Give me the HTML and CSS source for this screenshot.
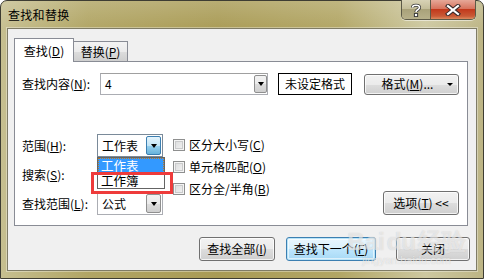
FILE: index.html
```html
<!DOCTYPE html>
<html>
<head>
<meta charset="utf-8">
<link rel="stylesheet" href="styles.css">
</head>
<body>
<div class="window">
  <div class="titlebar">
    <span class="title">查找和替换</span>
    <div class="caption">
      <div class="cap-btn help"><svg width="12" height="14" viewBox="0 0 12 14"><path d="M2.5 4.5 C2.5 1.5 9.5 1.5 9.5 4.5 C9.5 7 6 6.5 6 9" fill="none" stroke="#3a3a3a" stroke-width="3.2"/><path d="M2.5 4.5 C2.5 1.5 9.5 1.5 9.5 4.5 C9.5 7 6 6.5 6 9" fill="none" stroke="#fff" stroke-width="1.6"/><rect x="4.4" y="10.4" width="3.2" height="3.2" fill="#fff" stroke="#3a3a3a" stroke-width="1"/></svg></div>
      <div class="cap-btn close"><svg width="16" height="12" viewBox="0 0 16 12"><path d="M3 2 L13 10 M13 2 L3 10" stroke="#3a2a2a" stroke-width="4.2" stroke-linecap="square"/><path d="M3 2 L13 10 M13 2 L3 10" stroke="#fff" stroke-width="2.2" stroke-linecap="square"/></svg></div>
    </div>
  </div>
  <div class="client">
    <div class="tabs">
      <div class="tab active">查找(<u>D</u>)</div>
      <div class="tab">替换(<u>P</u>)</div>
    </div>
    <div class="panel">
      <div class="row-find">
        <span class="label-find">查找内容(<u>N</u>):</span>
        <div class="combo combo-find"><span class="combo-text">4</span><span class="drop drop-small"><i class="arrow"></i></span></div>
        <div class="format-box">未设定格式</div>
        <div class="btn btn-format"><span class="btn-label">格式(<u>M</u>)...</span><i class="arrow arrow-btn"></i></div>
      </div>
      <div class="lower">
        <div class="fields">
          <span class="flabel">范围(<u>H</u>):</span>
          <div class="combo combo-small open"><span class="combo-text">工作表</span><span class="drop drop-hot"><i class="arrow"></i></span>
            <div class="droplist">
              <div class="item selected">工作表</div>
              <div class="item">工作簿</div>
            </div>
          </div>
          <span class="flabel">搜索(<u>S</u>):</span>
          <div class="combo combo-small"><span class="combo-text">按行</span><span class="drop"><i class="arrow"></i></span></div>
          <span class="flabel">查找范围(<u>L</u>):</span>
          <div class="combo combo-small"><span class="combo-text">公式</span><span class="drop"><i class="arrow"></i></span></div>
          <div class="redmark"></div>
        </div>
        <div class="checks">
          <label class="check"><span class="box"></span>区分大小写(<u>C</u>)</label>
          <label class="check"><span class="box"></span>单元格匹配(<u>O</u>)</label>
          <label class="check"><span class="box"></span>区分全/半角(<u>B</u>)</label>
        </div>
        <div class="btn btn-options">选项(<u>T</u>) &lt;&lt;</div>
      </div>
    </div>
    <div class="actions">
      <div class="btn btn-all">查找全部(<u>I</u>)</div>
      <div class="btn btn-next default">查找下一个(<u>F</u>)</div>
      <div class="btn btn-close">关闭</div>
    </div>
    <div class="watermark"><span class="wm-big">Bai<span class="wm-du">du</span>经验</span><span class="wm-small">jingyan.baidu.com</span></div>
  </div>
</div>
</body>
</html>
```
FILE: styles.css
```css
html, body {
  margin: 0;
  padding: 0;
  width: 484px;
  height: 279px;
  overflow: hidden;
  background: #fff;
}
body {
  font-family: "Noto Sans CJK SC", "Noto Sans", sans-serif;
  font-size: 12px;
  color: #000;
}
u { text-decoration: underline; text-underline-offset: 1px; }

.window {
  width: 484px;
  height: 279px;
  box-sizing: border-box;
  border: 1px solid #3e3d33;
  border-radius: 7px 7px 0 0;
  background:
    linear-gradient(to bottom, rgba(255,255,255,0.18), rgba(255,255,255,0) 30px),
    linear-gradient(to right, #c6bf90 0%, #b1a564 18%, #a99b55 45%, #b2a665 70%, #cdc8a0 88%, #bdb585 100%);
  display: flex;
  flex-direction: column;
  position: relative;
}
.titlebar {
  height: 27px;
  display: flex;
  justify-content: space-between;
  align-items: flex-start;
  flex: none;
}
.title {
  margin: 6px 0 0 7px;
  line-height: 16px;
  color: #000;
  letter-spacing: 0.3px;
}
.caption {
  display: flex;
  margin-right: 7px;
  margin-top: -1px;
  border: 1px solid #5c5a48;
  border-top: none;
  border-radius: 0 0 5px 5px;
  overflow: hidden;
  box-shadow: 0 1px 0 rgba(255,255,255,0.5);
}
.cap-btn {
  height: 19px;
  display: flex;
  align-items: center;
  justify-content: center;
}
.help {
  width: 28px;
  background: linear-gradient(to bottom, #d8d3b6 0%, #c4be9a 45%, #a9a27a 50%, #b7b08a 100%);
  border-right: 1px solid #5c5a48;
}
.close {
  width: 44px;
  background: linear-gradient(to bottom, #e6a898 0%, #d7745e 45%, #c2391c 50%, #c95a36 85%, #dd8a5e 100%);
}

.client {
  flex: none;
  margin: 0 6px;
  height: 243px;
  box-sizing: border-box;
  background: #f0f0f0;
  border: 1px solid #7f7c66;
  box-shadow: 0 0 0 1px rgba(255,255,255,0.35);
  position: relative;
}
.tabs {
  display: flex;
  align-items: flex-end;
  padding: 9px 0 0 6px;
  height: 23px;
  position: relative;
  z-index: 2;
}
.tab {
  box-sizing: border-box;
  height: 20px;
  width: 54px;
  border: 1px solid #898c95;
  border-left: none;
  border-bottom: none;
  background: linear-gradient(to bottom, #f3f3f3 0%, #ebebeb 50%, #dddddd 51%, #cfcfcf 100%);
  display: flex;
  align-items: center;
  justify-content: center;
  line-height: 16px;
  padding-top: 1px;
}
.tab.active {
  width: 60px;
  height: 24px;
  border-left: 1px solid #898c95;
  background: #fff;
  margin-bottom: -1px;
  padding-top: 0;
}

.panel {
  margin-left: 6px;
  width: 454px;
  height: 165px;
  box-sizing: border-box;
  border: 1px solid #898c95;
  background: #fff;
  padding: 11px 8px 0 7px;
  position: relative;
}
.row-find {
  display: flex;
  align-items: center;
  height: 22px;
}
.label-find {
  width: 78px;
  flex: none;
  line-height: 16px;
}
.combo {
  box-sizing: border-box;
  border: 1px solid #abadb3;
  border-top-color: #a0a0a0;
  background: #fff;
  display: flex;
  align-items: stretch;
  position: relative;
}
.combo-find {
  width: 168px;
  height: 22px;
}
.combo-text {
  flex: 1;
  padding-left: 4px;
  display: flex;
  align-items: center;
  line-height: 16px;
}
.drop {
  box-sizing: border-box;
  width: 15px;
  margin: 1px;
  border: 1px solid #8f8f8f;
  border-radius: 2px;
  background: linear-gradient(to bottom, #f2f2f2 0%, #ebebeb 50%, #dddddd 51%, #cfcfcf 100%);
  display: flex;
  align-items: center;
  justify-content: center;
}
.drop-small {
  width: 13px;
  margin: 1px 0 1px 1px;
}
.drop-hot {
  border-color: #3c7fb1;
  background: linear-gradient(to bottom, #e5f4fc 0%, #c4e5f6 50%, #98d1ef 51%, #68b3db 100%);
}
.arrow {
  display: block;
  width: 0;
  height: 0;
  border-left: 3.5px solid transparent;
  border-right: 3.5px solid transparent;
  border-top: 4px solid #000;
}
.format-box {
  box-sizing: border-box;
  margin-left: 10px;
  width: 74px;
  height: 22px;
  border: 1px solid #000;
  background: #fff;
  display: flex;
  align-items: center;
  justify-content: center;
  line-height: 16px;
}
.btn {
  box-sizing: border-box;
  border: 1px solid #707070;
  border-radius: 3px;
  background: linear-gradient(to bottom, #f2f2f2 0%, #ebebeb 50%, #dddddd 51%, #cfcfcf 100%);
  box-shadow: inset 0 0 0 1px rgba(255,255,255,0.75);
  display: flex;
  align-items: center;
  justify-content: center;
  line-height: 16px;
  flex: none;
}
.btn-format {
  margin-left: 12px;
  width: 95px;
  height: 21px;
  position: relative;
}
.btn-label { margin-left: -8px; }
.arrow-btn {
  position: absolute;
  right: 5px;
  top: 8px;
  border-left-width: 3px;
  border-right-width: 3px;
  border-top-width: 3px;
}

.lower {
  display: flex;
  margin-top: 39px;
  height: 82px;
}
.fields {
  display: grid;
  grid-template-columns: 75px 66px;
  grid-template-rows: 23px 23px 23px;
  row-gap: 6px;
  align-items: center;
  position: relative;
  flex: none;
  align-content: start;
}
.flabel { line-height: 16px; }
.combo-small {
  width: 66px;
  height: 23px;
}
.combo-small .combo-text { padding-left: 4px; }
.combo-small .drop { width: 15px; }
.fields > .combo-small:last-of-type { margin-top: 2px; }
.combo.open { z-index: 3; border-color: #7a8a99; }
.droplist {
  position: absolute;
  left: -1px;
  top: 22px;
  width: 68px;
  box-sizing: border-box;
  border: 1px solid #646464;
  background: #fff;
  z-index: 4;
}
.item {
  height: 15px;
  line-height: 15px;
  padding-left: 3px;
  font-size: 12.5px;
}
.item.selected {
  background: #3399ff;
  color: #fff;
  outline: 1px dotted #c07a20;
  outline-offset: -1px;
}
.redmark {
  position: absolute;
  left: 69px;
  top: 38px;
  width: 82px;
  height: 22px;
  box-sizing: border-box;
  border: 3px solid #ee3b3b;
  z-index: 5;
}
.checks {
  margin-left: 10px;
  display: flex;
  flex-direction: column;
  flex: none;
}
.check {
  height: 22px;
  display: flex;
  align-items: center;
  line-height: 16px;
}
.box {
  box-sizing: border-box;
  width: 12px;
  height: 12px;
  border: 1px solid #8e8f8f;
  background: linear-gradient(135deg, #d9dadb 0%, #f4f4f4 100%);
  box-shadow: inset 0 0 0 1px #f4f4f4, inset 0 0 0 2px #c9cacb;
  margin-right: 4px;
  flex: none;
}
.btn-options {
  margin-left: auto;
  align-self: flex-end;
  width: 76px;
  height: 24px;
  margin-bottom: 1px;
}

.actions {
  display: flex;
  justify-content: flex-end;
  margin: 11px 6px 0 0;
}
.actions .btn { height: 24px; }
.btn-all { width: 76px; }
.btn-next { width: 90px; margin-left: 11px; }
.btn-close { width: 74px; margin-left: 20px; }
.btn.default {
  border-color: #3c7fb1;
  box-shadow: inset 0 0 0 1px #b7e4f9, inset 0 0 0 2px rgba(255,255,255,0.6);
  background: linear-gradient(to bottom, #eaf6fd 0%, #d9f0fc 50%, #bee6fd 51%, #a7d9f5 100%);
}

.watermark {
  position: absolute;
  right: 10px;
  bottom: 4px;
  display: flex;
  flex-direction: column;
  align-items: center;
  pointer-events: none;
  z-index: 6;
}
.wm-big {
  font-family: "Liberation Sans", sans-serif;
  font-size: 24px;
  font-weight: bold;
  color: rgba(255,255,255,0.55);
  line-height: 24px;
  text-shadow: 0 0 1px rgba(120,120,120,0.35);
}
.wm-du { margin: 0 2px; }
.wm-small {
  font-family: "Liberation Sans", sans-serif;
  font-size: 11px;
  color: rgba(255,255,255,0.6);
  text-shadow: 0 0 1px rgba(120,120,120,0.35);
  line-height: 12px;
}
```
